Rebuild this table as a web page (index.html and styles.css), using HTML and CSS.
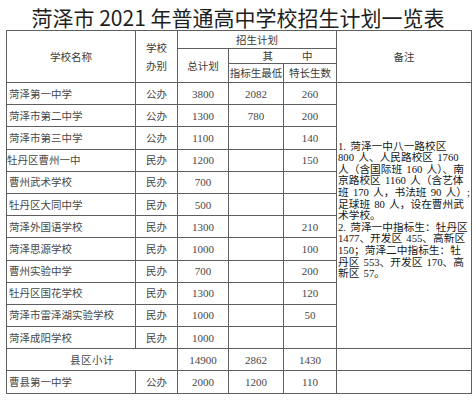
FILE: index.html
```html
<!DOCTYPE html>
<html lang="zh-CN">
<head>
<meta charset="utf-8">
<title>菏泽市 2021 年普通高中学校招生计划一览表</title>
<link rel="stylesheet" href="styles.css">
</head>
<body>
<h1 class="title">菏泽市 2021 年普通高中学校招生计划一览表</h1>
<table class="plan">
  <colgroup>
    <col class="c-name"><col class="c-type"><col class="c-total"><col class="c-quota"><col class="c-special"><col class="c-note">
  </colgroup>
  <thead>
    <tr class="h1">
      <th rowspan="3">学校名称</th>
      <th rowspan="3" class="two-line">学校<br>办别</th>
      <th colspan="3">招生计划</th>
      <th rowspan="3">备注</th>
    </tr>
    <tr class="h2">
      <th rowspan="2" class="total-h">总计划</th>
      <th colspan="2" class="qz"><span>其</span><span>中</span></th>
    </tr>
    <tr class="h3">
      <th>指标生最低</th>
      <th>特长生数</th>
    </tr>
  </thead>
  <tbody>
    <tr><td class="name">菏泽第一中学</td><td>公办</td><td class="num">3800</td><td class="num">2082</td><td class="num">260</td>
      <td rowspan="12" class="note">
        <div class="nl">1. 菏泽一中八一路校区</div>
        <div class="nl">800 人、人民路校区 1760</div>
        <div class="nl">人（含国际班 160 人）、南</div>
        <div class="nl">京路校区 1160 人（含艺体</div>
        <div class="nl">班 170 人，书法班 90 人）;</div>
        <div class="nl">足球班 80 人，设在曹州武</div>
        <div class="nl">术学校。</div>
        <div class="nl">2. 菏泽一中指标生：牡丹区</div>
        <div class="nl">1477、开发区 455、高新区</div>
        <div class="nl">150；菏泽二中指标生：牡</div>
        <div class="nl">丹区 553、开发区 170、高</div>
        <div class="nl">新区 57。</div>
      </td>
    </tr>
    <tr><td class="name">菏泽市第二中学</td><td>公办</td><td class="num">1300</td><td class="num">780</td><td class="num">200</td></tr>
    <tr><td class="name">菏泽市第三中学</td><td>公办</td><td class="num">1100</td><td></td><td class="num">140</td></tr>
    <tr><td class="name flush">牡丹区曹州一中</td><td>民办</td><td class="num">1200</td><td></td><td class="num">150</td></tr>
    <tr><td class="name">曹州武术学校</td><td>民办</td><td class="num">700</td><td></td><td></td></tr>
    <tr><td class="name">牡丹区大同中学</td><td>民办</td><td class="num">500</td><td></td><td></td></tr>
    <tr><td class="name">菏泽外国语学校</td><td>民办</td><td class="num">1300</td><td></td><td class="num">210</td></tr>
    <tr><td class="name">菏泽思源学校</td><td>民办</td><td class="num">1000</td><td></td><td class="num">100</td></tr>
    <tr><td class="name">曹州实验中学</td><td>民办</td><td class="num">700</td><td></td><td class="num">200</td></tr>
    <tr><td class="name">牡丹区国花学校</td><td>民办</td><td class="num">1300</td><td></td><td class="num">120</td></tr>
    <tr><td class="name">菏泽市雷泽湖实验学校</td><td>民办</td><td class="num">1000</td><td></td><td class="num">50</td></tr>
    <tr><td class="name">菏泽成阳学校</td><td>民办</td><td class="num">1000</td><td></td><td></td></tr>
    <tr><td colspan="2" class="sub">县区小计</td><td class="num">14900</td><td class="num">2862</td><td class="num">1430</td><td></td></tr>
    <tr><td class="name">曹县第一中学</td><td>公办</td><td class="num">2000</td><td class="num">1200</td><td class="num">110</td><td></td></tr>
  </tbody>
</table>
</body>
</html>
```

FILE: styles.css
```css
html, body {
  margin: 0;
  padding: 0;
  background: #ffffff;
}

body {
  width: 476px;
  height: 400px;
  overflow: hidden;
  font-family: "Noto Sans CJK SC", sans-serif;
  color: #474747;
}

.title {
  margin: 0;
  padding-top: 4px;
  height: 26px;
  line-height: 26px;
  font-size: 21px;
  font-weight: normal;
  text-align: center;
  color: #1e1e1e;
  white-space: nowrap;
}

.plan {
  margin-left: 6px;
  border-collapse: collapse;
  table-layout: fixed;
  width: 465px;
  font-size: 10.5px;
}

.c-name { width: 129px; }
.c-type { width: 42px; }
.c-total { width: 51px; }
.c-quota { width: 55px; }
.c-special { width: 53px; }
.c-note { width: 135px; }

.plan th,
.plan td {
  border: 1px solid #5f5f5f;
  padding: 0;
  text-align: center;
  vertical-align: middle;
  font-weight: normal;
  white-space: nowrap;
  overflow: hidden;
}

.plan th {
  color: #3a3a3a;
  line-height: 14px;
}

.h1 { height: 18px; }
.h2 { height: 15px; }
.h3 { height: 19px; }

.two-line {
  line-height: 18px !important;
}

.qz span {
  display: inline-block;
}

.qz span:first-child {
  margin-left: 10px;
  margin-right: 29px;
}

.plan tbody tr {
  height: 22.2px;
}

.plan td {
  line-height: 14px;
}

.plan td.name {
  text-align: left;
  padding-left: 2px;
}

.plan td.name.flush {
  padding-left: 0;
}

.plan td.num {
  font-family: "Liberation Serif", "Noto Sans CJK SC", serif;
  font-size: 11px;
}

.plan td.sub {
  letter-spacing: 0.5px;
}

.plan td.note {
  text-align: left;
  vertical-align: middle;
  padding: 0 0 11px 1px;
  color: #161616;
  font-family: "Liberation Serif", "Noto Sans CJK SC", serif;
  font-size: 10.7px;
  word-spacing: 1.5px;
  overflow: visible;
}

.nl {
  line-height: 11.6px;
  height: 11.6px;
  white-space: nowrap;
}
```
